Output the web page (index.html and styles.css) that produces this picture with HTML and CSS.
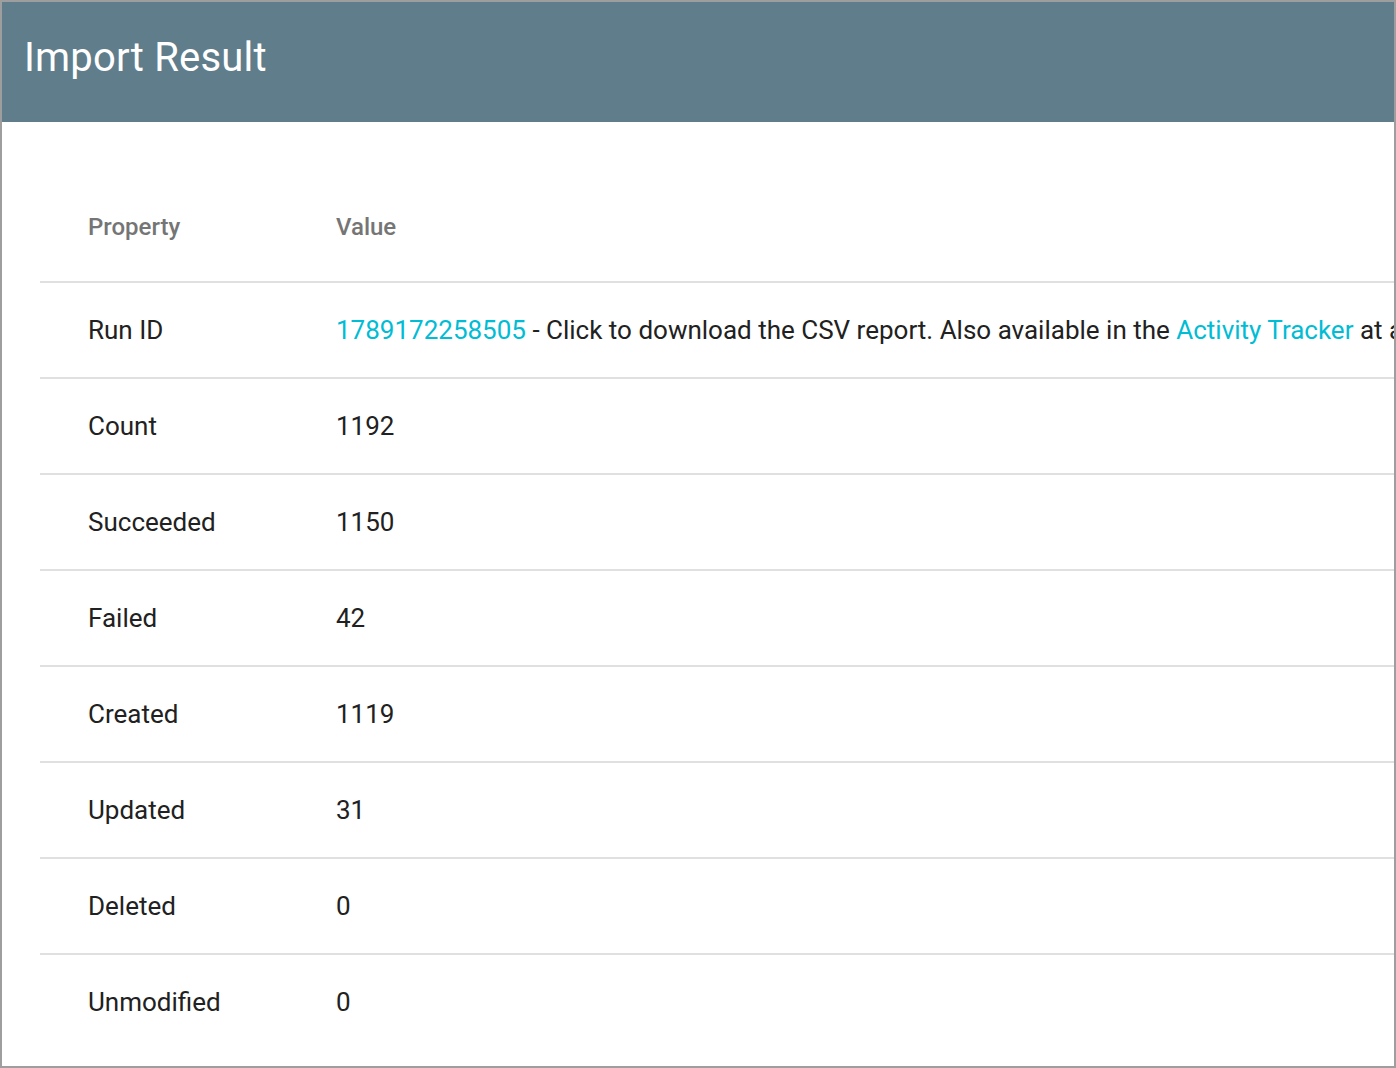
FILE: index.html
```html
<!DOCTYPE html>
<html lang="en">
<head>
<meta charset="utf-8">
<title>Import Result</title>
<link rel="stylesheet" href="styles.css">
</head>
<body>
<div class="frame">
  <header class="bar">
    <h1 class="title">Import Result</h1>
  </header>
  <main class="content">
    <table class="result">
      <thead>
        <tr>
          <th class="col-prop">Property</th>
          <th>Value</th>
        </tr>
      </thead>
      <tbody>
        <tr><td class="col-prop">Run ID</td><td><a class="link" href="#">1789172258505</a> - Click to download the CSV report. Also available in the <a class="link" href="#">Activity Tracker</a> at any time.</td></tr>
        <tr><td class="col-prop">Count</td><td>1192</td></tr>
        <tr><td class="col-prop">Succeeded</td><td>1150</td></tr>
        <tr><td class="col-prop">Failed</td><td>42</td></tr>
        <tr><td class="col-prop">Created</td><td>1119</td></tr>
        <tr><td class="col-prop">Updated</td><td>31</td></tr>
        <tr><td class="col-prop">Deleted</td><td>0</td></tr>
        <tr><td class="col-prop">Unmodified</td><td>0</td></tr>
      </tbody>
    </table>
  </main>
</div>
</body>
</html>
```
FILE: styles.css
```css
html, body {
  margin: 0;
  padding: 0;
  background: #ffffff;
}
body {
  font-family: Roboto, "Liberation Sans", Arial, sans-serif;
  color: #212121;
}
.frame {
  box-sizing: border-box;
  width: 1396px;
  height: 1068px;
  border: 2px solid #9e9e9e;
  overflow: hidden;
  display: flex;
  flex-direction: column;
}
.bar {
  background: #607d8b;
  height: 120px;
  flex: none;
  display: flex;
  align-items: center;
  padding: 0 22px;
}
.title {
  margin: 0 0 10px 0;
  color: #ffffff;
  font-size: 40px;
  font-weight: 400;
  letter-spacing: 0.2px;
}
.content {
  padding: 51px 0 0 38px;
  overflow: hidden;
}
.result {
  border-collapse: collapse;
  white-space: nowrap;
  width: 1700px;
  font-size: 26px;
}
.result th {
  text-align: left;
  font-weight: 500;
  font-size: 24px;
  color: #757575;
  height: 108px;
  padding: 0 0 0 48px;
  border-bottom: 2px solid #e0e0e0;
  vertical-align: middle;
}
.result td {
  height: 94px;
  padding: 0 0 0 48px;
  border-bottom: 2px solid #e0e0e0;
  vertical-align: middle;
}
.result tbody tr:last-child td {
  border-bottom: none;
}
.result .col-prop {
  width: 200px;
}
.link {
  color: #00bcd4;
  text-decoration: none;
}
```
